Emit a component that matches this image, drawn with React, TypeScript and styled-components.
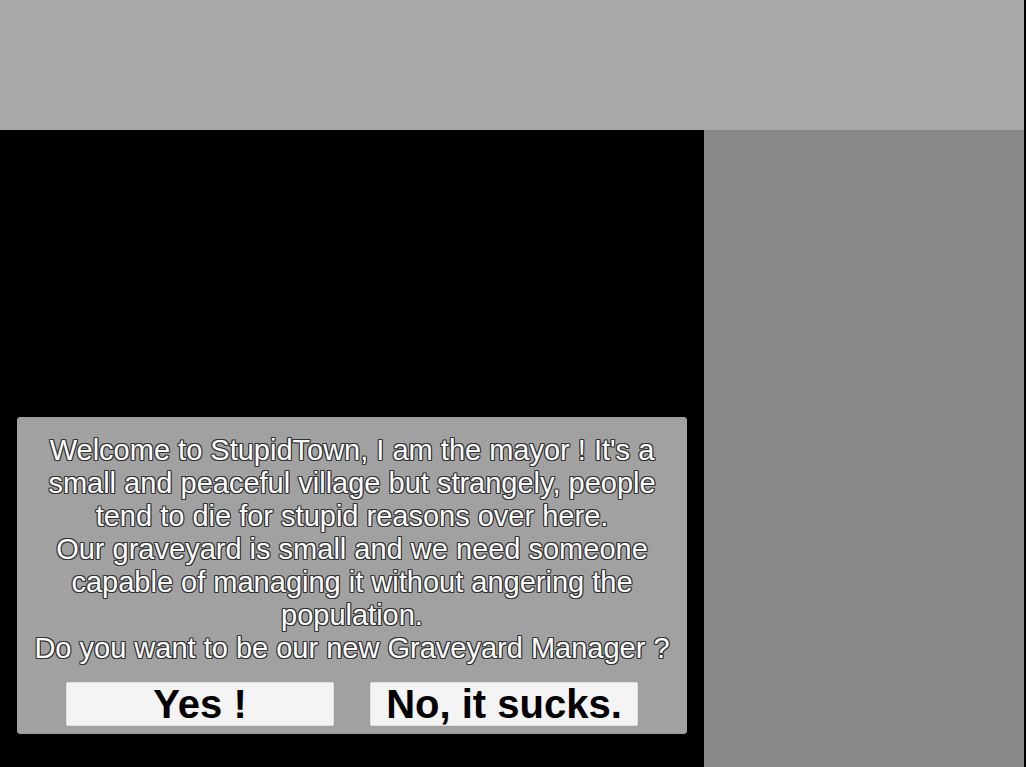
import React from "react";
import styled, { createGlobalStyle } from "styled-components";

const Global = createGlobalStyle`
  html, body { margin: 0; padding: 0; background: #000; }
  body { font-family: "Liberation Sans", Arial, sans-serif; }
  #root { width: 1026px; height: 767px; overflow: hidden; }
`;

const Screen = styled.div`
  width: 1026px;
  height: 767px;
  display: flex;
  flex-direction: column;
  background: #000;
`;

const TopBar = styled.div`
  height: 130px;
  width: 1024px;
  background: #a8a8a8;
  flex: none;
`;

const Body = styled.div`
  flex: 1;
  display: flex;
`;

const Stage = styled.div`
  width: 704px;
  background: #000;
  display: flex;
  flex-direction: column;
  justify-content: flex-end;
  padding: 0 17px 33px 17px;
  box-sizing: border-box;
`;

const SidePanel = styled.div`
  width: 320px;
  background: #898989;
`;

const Dialog = styled.div`
  width: 670px;
  height: 317px;
  box-sizing: border-box;
  background: #a1a1a1;
  border-radius: 4px;
  box-shadow: inset 0 0 0 1px #9a9a9a;
  padding: 17px 0 8px;
  display: flex;
  flex-direction: column;
  align-items: center;
`;

const Message = styled.p`
  margin: 0;
  font-size: 29px;
  line-height: 33px;
  color: #ffffff;
  text-align: center;
  white-space: nowrap;
  text-shadow:
    1px 0 0 #333, -1px 0 0 #333, 0 1px 0 #333, 0 -1px 0 #333,
    1px 1px 0 #333, -1px -1px 0 #333, 1px -1px 0 #333, -1px 1px 0 #333;
`;

const Buttons = styled.div`
  display: flex;
  gap: 36px;
  margin-top: 17px;
`;

const Button = styled.button`
  width: 268px;
  height: 44px;
  padding: 0;
  border: none;
  border-radius: 3px;
  background: #f4f4f4;
  box-shadow: inset 0 0 0 1px #e2e2e2;
  color: #000;
  font-family: "Liberation Sans", Arial, sans-serif;
  font-weight: bold;
  font-size: 40px;
  line-height: 44px;
  cursor: pointer;
`;

const lines = [
  "Welcome to StupidTown, I am the mayor ! It's a",
  "small and peaceful village but strangely, people",
  "tend to die for stupid reasons over here.",
  "Our graveyard is small and we need someone",
  "capable of managing it without angering the",
  "population.",
  "Do you want to be our new Graveyard Manager ?",
];

export default function App() {
  return (
    <>
      <Global />
      <Screen>
        <TopBar />
        <Body>
          <Stage>
            <Dialog>
              <Message>
                {lines.map((l, i) => (
                  <React.Fragment key={i}>
                    {l}
                    {i < lines.length - 1 && <br />}
                  </React.Fragment>
                ))}
              </Message>
              <Buttons>
                <Button>Yes !</Button>
                <Button>No, it sucks.</Button>
              </Buttons>
            </Dialog>
          </Stage>
          <SidePanel />
        </Body>
      </Screen>
    </>
  );
}
